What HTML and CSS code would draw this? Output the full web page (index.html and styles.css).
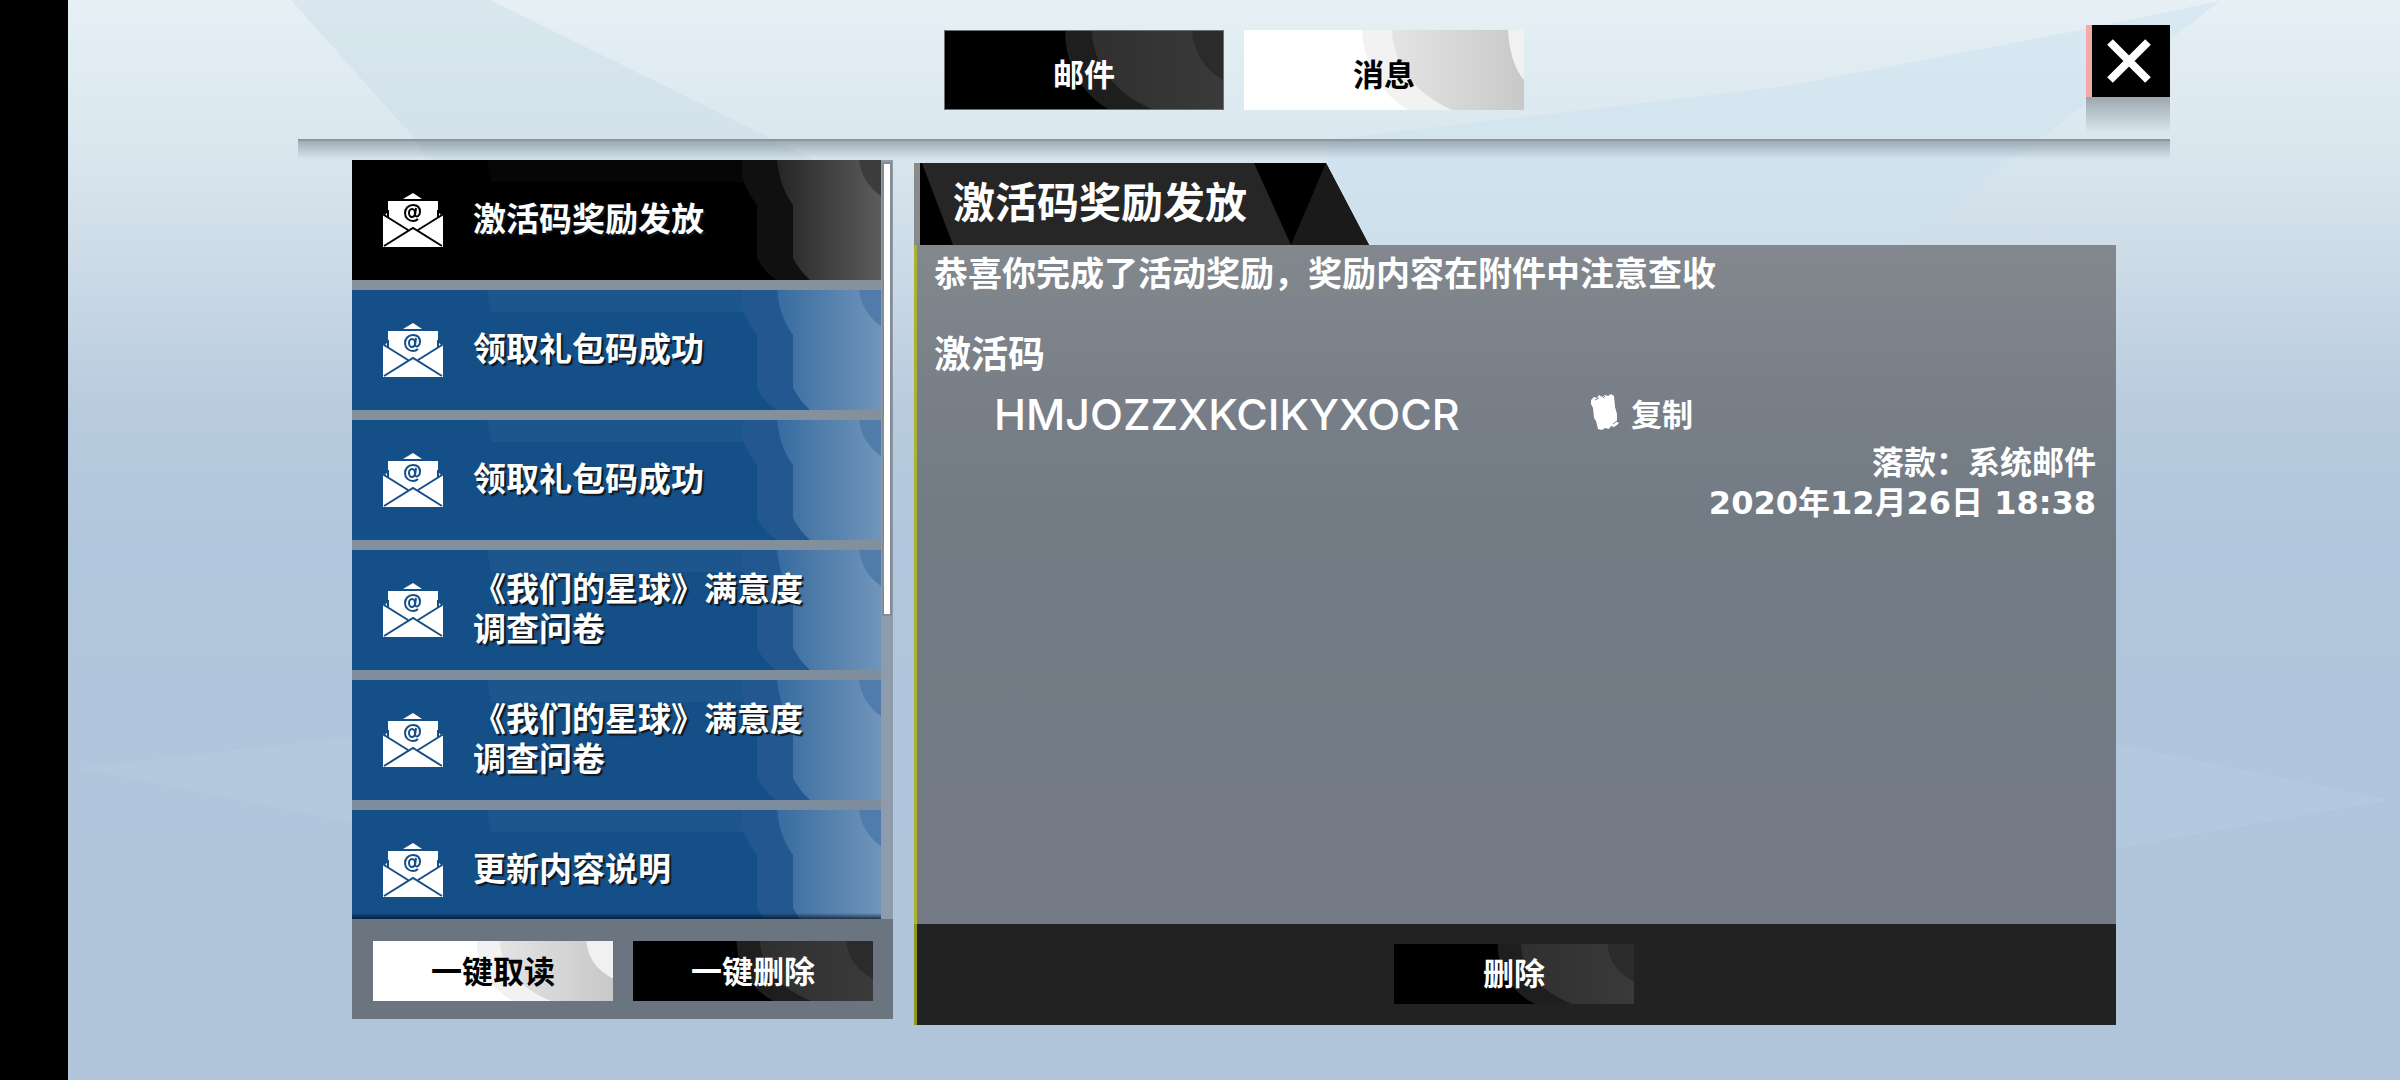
FILE: index.html
```
<!DOCTYPE html>
<html lang="zh-CN">

<head>
    <meta charset="UTF-8">
    <title>邮件</title>
    <link rel="stylesheet" href="styles.css">
</head>

<body>
    <!--公用图形-->
    <svg class="defs" aria-hidden="true">
        <defs>
            <linearGradient id="fade" x1="0" x2="1" y1="0" y2="0">
                <stop offset="0" stop-color="#fff" stop-opacity="0" />
                <stop offset="1" stop-color="#fff" />
            </linearGradient>
            <mask id="shine" maskContentUnits="objectBoundingBox" x="0" y="0" width="1" height="1">
                <rect width="1" height="1" fill="url(#fade)" />
            </mask>
        </defs>
        <symbol id="btn-bg" viewBox="0 0 280 80" preserveAspectRatio="none">
            <path d="M121 0C121 30 134 62 164 80H280V0Z" fill="var(--arc)" />
            <path d="M148 0C149 32 168 62 208 80H280V0Z" fill="var(--g1)" />
            <path d="M148 0C149 32 168 62 208 80H280V0Z" fill="var(--g2)" mask="url(#shine)" />
            <path d="M249 0C250 22 262 40 280 50V0Z" fill="var(--corner)" />
        </symbol>
        <symbol id="btn-bg-light" viewBox="0 0 280 80" preserveAspectRatio="none">
            <path d="M118 0C119 30 134 62 164 80H280V0Z" fill="var(--arc)" />
            <path d="M148 0C149 32 168 62 208 80H280V0Z" fill="var(--g1)" />
            <path d="M148 0C149 32 168 62 208 80H280V0Z" fill="var(--g2)" mask="url(#shine)" />
            <path d="M264 0C265 22 271 40 280 50V0Z" fill="var(--corner)" />
        </symbol>
        <symbol id="row-bg" viewBox="0 0 529 120" preserveAspectRatio="none">
            <path d="M135 0L139 22H392V0Z" fill="var(--band)" />
            <path d="M390 0V16C393 28 400 38 405 45V98C410 108 416 114 424 120H529V0Z" fill="var(--arc)" />
            <path d="M425 0C427 20 433 34 441 45V98C446 107 451 114 458 120H529V0Z" fill="var(--g1)" />
            <path d="M425 0C427 20 433 34 441 45V98C446 107 451 114 458 120H529V0Z" fill="var(--g2)" mask="url(#shine)" />
            <path d="M507 0C509 15 516 27 529 36V0Z" fill="var(--corner)" />
        </symbol>
        <symbol id="mail" viewBox="0 0 60 54">
            <path d="M20 6L30 0L39 6Z" fill="#fff" />
            <path d="M5 8H55V54H5Z" fill="#fff" />
            <path d="M5 17L0 22V54H60V22L55 17V40H5Z" fill="#fff" />
            <path d="M5 17L1 22L25 37M55 17L59 22L35 37M1 53L30 35L59 53M5 17V24M55 17V24" fill="none" stroke="var(--row)" stroke-width="2" />
            <ellipse cx="29" cy="20" rx="3" ry="4" fill="none" stroke="var(--row)" stroke-width="2" />
            <path d="M33 15L32 22C33 25 37 23 37 19C37 14 34 12 30 12C25 12 22 16 22 20C22 25 26 28 30 28C32 28 34 27 35 26" fill="none" stroke="var(--row)" stroke-width="2" />
        </symbol>
    </svg>

    <div class="edge"></div>
    <div class="stage">
        <svg class="sky" viewBox="0 0 2332 1080" preserveAspectRatio="none" aria-hidden="true">
            <path d="M223 0H422L706 140L828 200H379L348 140Z" fill="#c6d8e6" opacity=".38" />
            <path d="M2152 1L2018 29L1719 86L1260 140V260H1820L1937 165Z" fill="#cbe2f0" opacity=".5" />
            <path d="M8 768L290 736V824Z" fill="#b8cce0" opacity=".5" />
            <path d="M2040 742L2322 800L2040 850Z" fill="#b5cce1" opacity=".6" />
        </svg>

        <div class="top">
            <div class="tabs">
                <button class="btn dark" type="button"><svg><use href="#btn-bg" /></svg><span>邮件</span></button>
                <button class="btn light" type="button"><svg><use href="#btn-bg-light" /></svg><span>消息</span></button>
            </div>
            <button class="close" type="button" aria-label="关闭">
                <svg viewBox="0 0 44 44"><path d="M3 3L41 41M41 3L3 41" stroke="#fff" stroke-width="8" /></svg>
            </button>
        </div>

        <div class="main">
            <!--邮件列表-->
            <div class="side">
                <div class="scroll">
                    <ul class="list">
                        <li><button class="row active" type="button"><svg class="row-bg"><use href="#row-bg" /></svg><svg class="mail"><use href="#mail" /></svg><span>激活码奖励发放</span></button></li>
                        <li><button class="row" type="button"><svg class="row-bg"><use href="#row-bg" /></svg><svg class="mail"><use href="#mail" /></svg><span>领取礼包码成功</span></button></li>
                        <li><button class="row" type="button"><svg class="row-bg"><use href="#row-bg" /></svg><svg class="mail"><use href="#mail" /></svg><span>领取礼包码成功</span></button></li>
                        <li><button class="row" type="button"><svg class="row-bg"><use href="#row-bg" /></svg><svg class="mail"><use href="#mail" /></svg><span>《我们的星球》满意度<br>调查问卷</span></button></li>
                        <li><button class="row" type="button"><svg class="row-bg"><use href="#row-bg" /></svg><svg class="mail"><use href="#mail" /></svg><span>《我们的星球》满意度<br>调查问卷</span></button></li>
                        <li><button class="row" type="button"><svg class="row-bg"><use href="#row-bg" /></svg><svg class="mail"><use href="#mail" /></svg><span>更新内容说明</span></button></li>
                    </ul>
                    <div class="bar"><div class="thumb"></div></div>
                </div>
                <div class="side-foot">
                    <button class="btn small light" type="button"><svg><use href="#btn-bg" /></svg><span>一键取读</span></button>
                    <button class="btn small dark" type="button"><svg><use href="#btn-bg" /></svg><span>一键删除</span></button>
                </div>
            </div>

            <!--邮件内容-->
            <div class="detail">
                <div class="title">
                    <svg viewBox="0 0 449 82" preserveAspectRatio="none" aria-hidden="true">
                        <path d="M0 0H406L449 82H0Z" fill="#000" />
                        <path d="M2 0H334L371 82H33Z" fill="#262626" />
                        <path d="M406 0L449 82H371Z" fill="#1a1a1a" />
                    </svg>
                    <h2>激活码奖励发放</h2>
                </div>
                <div class="content">
                    <p class="msg">恭喜你完成了活动奖励，奖励内容在附件中注意查收</p>
                    <h3>激活码</h3>
                    <div class="code">
                        <span>HMJOZZXKCIKYXOCR</span>
                        <button class="copy" type="button">
                            <svg viewBox="0 0 28 36"><path d="M0 6L3 3L6 4L8 1L11 3L14 1L17 2L20 0L23 2L24 13L26 20V28L28 29L26 31L23 33L20 32L18 35L14 34L11 36L7 35L5 27L3 24L2 14L0 10Z" fill="#fff" /><path d="M4 6L8 4M12 4L14 2M22 30L26 27" stroke="#78808a" /></svg>
                            复制
                        </button>
                    </div>
                    <div class="sign">落款：系统邮件<br>2020年12月26日 18:38</div>
                </div>
                <div class="detail-foot">
                    <button class="btn small dark" type="button"><svg><use href="#btn-bg" /></svg><span>删除</span></button>
                </div>
            </div>
        </div>
    </div>
</body>

</html>
```
FILE: styles.css
```
* {
    box-sizing: border-box;
}

body {
    margin: 0;
    display: flex;
    min-height: 100vh;
    font-family: Inter, "Noto Sans CJK SC", sans-serif;
    font-weight: 700;
    color: #fff;
}

button {
    border: 0;
    padding: 0;
    background: none;
    color: inherit;
    font: inherit;
    cursor: pointer;
}

h2,
h3,
p,
ul {
    margin: 0;
    padding: 0;
    font-weight: 700;
}

.defs {
    position: absolute;
    width: 0;
    height: 0;
}

.edge {
    width: 68px;
    background-color: #000;
}

.stage {
    position: relative;
    flex: 1;
    display: flex;
    flex-direction: column;
    height: 100vh;
    padding: 0 230px 55px;
    background: linear-gradient(#e6f0f5 0%, #dbe8ef 12%, #cddbe7 24%, #b8cbde 38%, #b0c6dc 52%, #b0c5da 100%);
}

.sky {
    position: absolute;
    left: 0;
    top: 0;
    width: 100%;
    height: 100%;
}

/* 顶部 */
.top {
    position: relative;
    display: grid;
    grid-template-columns: 1fr auto 1fr;
    height: 141px;
    border-bottom: 2px solid #8e979e;
}

.top::after {
    content: "";
    position: absolute;
    left: 0;
    right: 0;
    top: 141px;
    height: 18px;
    background: linear-gradient(rgba(80, 92, 102, .42), rgba(80, 92, 102, 0));
}

.tabs {
    grid-column: 2;
    display: flex;
    gap: 20px;
    padding-top: 30px;
}

.btn {
    position: relative;
    width: 280px;
    height: 80px;
    padding-top: 4px;
    font-size: 31px;
}

.btn svg {
    position: absolute;
    left: 0;
    top: 0;
    width: 100%;
    height: 100%;
}

.btn span {
    position: relative;
}

.btn.small {
    width: 240px;
    height: 60px;
    padding: 0 0 4px;
}

.dark {
    --arc: #1e1e1e;
    --g1: #303030;
    --g2: #3a3a3a;
    --corner: #2b2b2b;
    background-color: #000;
}

.tabs .dark {
    border: 1px solid #6b7073;
}

.light {
    --arc: #f2f2f2;
    --g1: #e4e4e4;
    --g2: #c8c8c8;
    --corner: #f1f1f1;
    background-color: #fff;
    color: #000;
}

.close {
    position: relative;
    justify-self: end;
    display: flex;
    align-items: center;
    justify-content: center;
    width: 84px;
    height: 72px;
    margin-top: 25px;
    padding-right: 4px;
    border-left: 6px solid #f4a9ab;
    background-color: #000;
}

.close svg {
    width: 44px;
    height: 44px;
}

.close::after {
    content: "";
    position: absolute;
    left: -6px;
    right: 0;
    top: 72px;
    height: 36px;
    background: linear-gradient(rgba(90, 100, 112, .5), rgba(90, 100, 112, 0));
}

/* 主体 */
.main {
    position: relative;
    flex: 1;
    display: grid;
    grid-template-columns: 541px 1fr;
    gap: 21px;
    min-height: 0;
    padding: 19px 54px 0;
}

.side {
    display: flex;
    flex-direction: column;
    min-height: 0;
    margin-bottom: 6px;
}

.scroll {
    position: relative;
    flex: 1;
    display: flex;
    min-height: 0;
    overflow: hidden;
    background: linear-gradient(#89929b, #7b8c9e);
}

.scroll::after {
    content: "";
    position: absolute;
    left: 0;
    right: 12px;
    bottom: 0;
    height: 6px;
    background: linear-gradient(rgba(0, 10, 30, 0), rgba(0, 10, 30, .7));
}

.list {
    flex: 1;
    list-style: none;
}

.list li {
    margin-bottom: 10px;
}

.row {
    --row: #154f88;
    --band: #1d558d;
    --arc: #22588f;
    --g1: #386ca0;
    --g2: #7195ba;
    --corner: #4f7caa;
    position: relative;
    display: flex;
    align-items: center;
    width: 100%;
    height: 120px;
    padding-left: 31px;
    background-color: var(--row);
    font-size: 33px;
    line-height: 40px;
    text-align: left;
    text-shadow: 2px 2px 1px #101820;
}

.row.active {
    --row: #000;
    --band: #060606;
    --arc: #101010;
    --g1: #262626;
    --g2: #5c5c5c;
    --corner: #3c3c3c;
}

.row span {
    position: relative;
    padding-bottom: 2px;
}

.row-bg {
    position: absolute;
    left: 0;
    top: 0;
    width: 100%;
    height: 100%;
}

.mail {
    position: relative;
    width: 60px;
    height: 54px;
    margin-right: 30px;
}

.bar {
    width: 12px;
    padding: 2px 1px 0;
    background-color: #8d9bab;
}

.thumb {
    height: 60%;
    border: 2px solid #858b90;
    background-color: #fff;
}

.side-foot {
    display: flex;
    gap: 20px;
    height: 100px;
    padding: 22px 20px 0 21px;
    background-color: #6a7580;
}

/* 详情 */
.detail {
    display: flex;
    flex-direction: column;
    min-height: 0;
    padding-top: 3px;
}

.title {
    position: relative;
    width: 455px;
    height: 82px;
    border-left: 6px solid #8a8a8a;
}

.title svg {
    position: absolute;
    left: 0;
    top: 0;
    width: 100%;
    height: 100%;
}

.title h2 {
    position: relative;
    padding-left: 33px;
    font-size: 42px;
    line-height: 80px;
}

.content {
    flex: 1;
    padding: 0 20px 0 17px;
    border-left: 3px solid #a9b32f;
    background: linear-gradient(#82888d, #777e87 25%, #717b84 45%, #747a86 100%);
}

.msg {
    font-size: 34px;
    line-height: 58px;
}

.content h3 {
    margin: 25px 0 3px;
    font-size: 37px;
    line-height: 54px;
}

.code {
    display: grid;
    grid-template-columns: 597px auto;
    justify-content: start;
    align-items: center;
    height: 58px;
    padding-left: 60px;
    font-size: 43px;
    font-weight: 500;
}

.copy {
    display: flex;
    align-items: center;
    gap: 12px;
    padding-bottom: 4px;
    font-size: 31px;
    font-weight: 700;
}

.copy svg {
    width: 28px;
    height: 36px;
}

.sign {
    font-family: "DejaVu Sans", "Noto Sans CJK SC", sans-serif;
    font-size: 32px;
    line-height: 40px;
    text-align: right;
}

.detail-foot {
    display: flex;
    align-items: center;
    justify-content: center;
    height: 101px;
    padding: 0 5px 2px 0;
    border-left: 3px solid #8c9620;
    background-color: #222;
}
```
